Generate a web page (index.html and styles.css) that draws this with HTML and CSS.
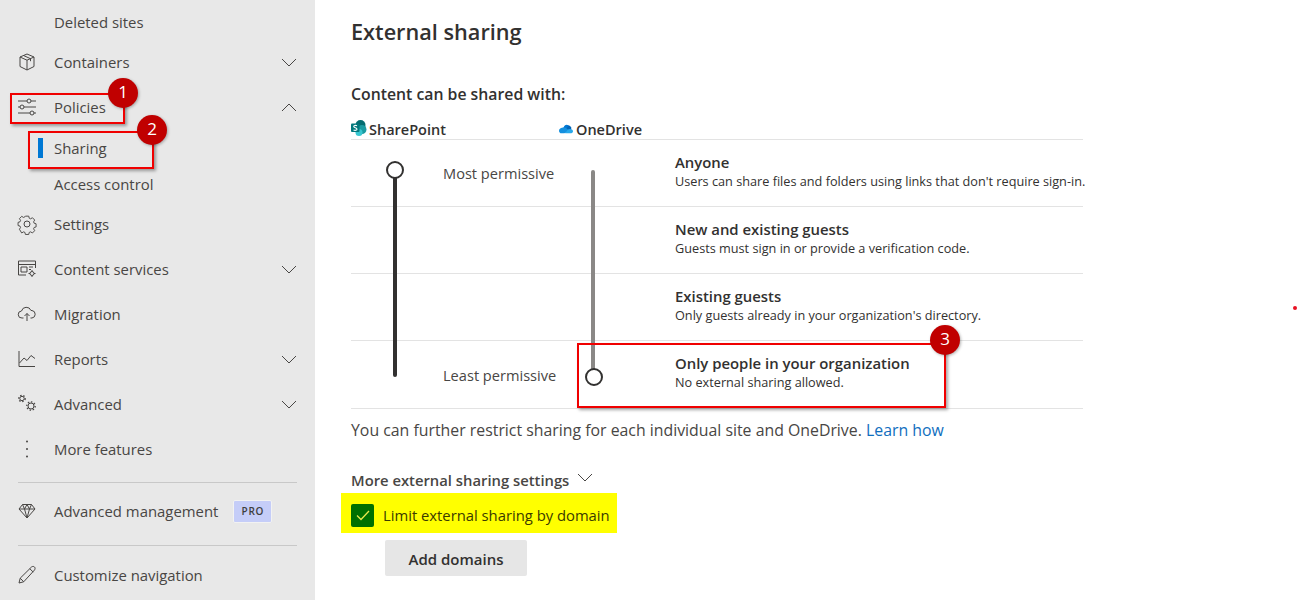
FILE: index.html
```html
<!DOCTYPE html>
<html lang="en">
<head>
<meta charset="utf-8">
<title>External sharing</title>
<link rel="stylesheet" href="styles.css">
</head>
<body>
<div class="page">
  <nav class="sidebar">
    <div class="row"><span class="icon"></span><span>Deleted sites</span></div>
    <div class="row gap-s">
      <svg class="icon" viewBox="0 0 18 18"><path d="M9 1l7 3v9.500L9 17l-7-3.500V4zM2 4l7 3.200L16 4M9 7.200V17M5.500 2.500l7 3.200v2.500"/></svg>
      <span>Containers</span>
      <svg class="chev" viewBox="0 0 16 9"><path d="M1 1l7 7 7-7"/></svg>
    </div>
    <div class="row gap-l">
      <svg class="icon" viewBox="0 0 18 18"><path d="M0 3h18M0 9h18M0 15h18"/><circle class="knock" cx="11" cy="3" r="2"/><circle class="knock" cx="4" cy="9" r="2"/><circle class="knock" cx="14" cy="15" r="2"/></svg>
      <span>Policies</span>
      <svg class="chev" viewBox="0 0 16 9"><path d="M1 8l7-7 7 7"/></svg>
    </div>
    <div class="row sub-first current"><span class="icon"><i class="marker"></i></span><span>Sharing</span></div>
    <div class="row"><span class="icon"></span><span>Access control</span></div>
    <div class="row gap-s">
      <svg class="icon" viewBox="0 0 18 18"><path d="M7.200 .8h3.600l.5 2.200 1.500.7 2-1.200 2.400 2.500-1.200 1.900.6 1.500 2.100.6v3.400l-2.100.6-.6 1.400 1.200 2-2.400 2.500-2-1.200-1.500.6-.5 2.200H7.200l-.5-2.200-1.500-.6-2 1.200L.8 14.900l1.200-2-.6-1.400L-.7 10.900V7.500l2.100-.6.6-1.500L.8 3.500 3.200 1l2 1.200 1.500-.7z" transform="translate(.7 .4) scale(.93)"/><circle cx="9" cy="9" r="3"/></svg>
      <span>Settings</span>
    </div>
    <div class="row gap-l">
      <svg class="icon" viewBox="0 0 18 18"><path d="M8 15H.5V1h17v7M.5 4.500h17M3 7h6v5H3zM11 7h4M11 9.500h2"/><circle cx="14" cy="13.500" r="2"/><path d="M14 10v1.500M14 15.500V17M10.500 13.500H12M16 13.500h1.500"/></svg>
      <span>Content services</span>
      <svg class="chev" viewBox="0 0 16 9"><path d="M1 1l7 7 7-7"/></svg>
    </div>
    <div class="row gap-l">
      <svg class="icon" viewBox="0 0 18 18"><path d="M5.500 13H4a3.500 3.500 0 0 1-.5-7A5 5 0 0 1 13 5.500h1a3.800 3.800 0 0 1 0 7.500h-1.500M9 16V8.500M6.500 11L9 8.500l2.500 2.500"/></svg>
      <span>Migration</span>
    </div>
    <div class="row gap-l">
      <svg class="icon" viewBox="0 0 18 18"><path d="M1 1v15.500h16M1.500 13l4.500-5 3 2.500L13 5.500l4 3"/></svg>
      <span>Reports</span>
      <svg class="chev" viewBox="0 0 16 9"><path d="M1 1l7 7 7-7"/></svg>
    </div>
    <div class="row gap-l">
      <svg class="icon" viewBox="0 0 18 18"><circle cx="4" cy="3.500" r="2.200"/><circle class="teeth" cx="4" cy="3.500" r="3.200"/><circle cx="13" cy="11" r="3"/><circle class="teeth" cx="13" cy="11" r="4.200"/></svg>
      <span>Advanced</span>
      <svg class="chev" viewBox="0 0 16 9"><path d="M1 1l7 7 7-7"/></svg>
    </div>
    <div class="row gap-l">
      <svg class="icon" viewBox="0 0 18 18"><circle class="dot" cx="9" cy="1.500" r="1"/><circle class="dot" cx="9" cy="9" r="1"/><circle class="dot" cx="9" cy="16.500" r="1"/></svg>
      <span>More features</span>
    </div>
    <hr class="rule rule-a">
    <div class="row">
      <svg class="icon" viewBox="0 0 18 18"><path d="M4.500 2.500h9L17 7l-8 9-8-9zM1 7h16M6.500 7L9 16l2.500-9M4.500 2.500L6.500 7 9 2.500 11.500 7l2-4.500"/></svg>
      <span>Advanced management</span>
      <span class="pro">PRO</span>
    </div>
    <hr class="rule rule-b">
    <div class="row">
      <svg class="icon" viewBox="0 0 18 18"><path d="M1 17l1.200-4.800L13.500 1c1-.8 2.300-.7 3 0s.8 2 0 3L5.700 15.800zM2.200 12.200l3.500 3.600M11.800 2.700l3.500 3.500"/></svg>
      <span>Customize navigation</span>
    </div>
  </nav>

  <main class="content">
    <h1 class="title">External sharing</h1>
    <h2 class="lead">Content can be shared with:</h2>
    <div class="apps">
      <div class="app app-sp">
        <svg class="app-icon" viewBox="0 0 16 16"><circle cx="9.500" cy="5" r="5" fill="#036c70"/><circle cx="11" cy="9.500" r="4.500" fill="#1a9ba1"/><circle cx="8" cy="12.500" r="3.500" fill="#37c6d0"/><rect x="0" y="3.500" width="8.500" height="8.500" rx="1" fill="#03787c"/><path class="sp-s" d="M6 5.800C4.500 5 2.700 5.400 2.700 6.600c0 1.400 3.300 1 3.300 2.600 0 1.200-2 1.500-3.500.8"/></svg>
        <span>SharePoint</span>
      </div>
      <div class="app">
        <svg class="app-icon od" viewBox="0 0 16 11"><path d="M5 8a5 5 0 0 1 9-4v3z" fill="#0364b8"/><path d="M5.500 3.500A4 4 0 0 1 11 2l-3 4z" fill="#0078d4"/><path d="M3.500 4.500c1-.5 3-1 4.500.5l5 4-7 2H3C1 11 0 9.500 0 8c0-2 1.800-3.500 3.500-3.500z" fill="#1490df"/><path d="M7 10.800L10 7c1.500-1.500 6-1 6 2 0 1-.8 1.800-2 1.800z" fill="#28a8ea"/></svg>
        <span>OneDrive</span>
      </div>
    </div>
    <div class="levels">
      <div class="level">
        <div class="perm">Most permissive</div>
        <div class="level-text"><strong>Anyone</strong><small>Users can share files and folders using links that don't require sign-in.</small></div>
      </div>
      <div class="level">
        <div class="perm"></div>
        <div class="level-text"><strong>New and existing guests</strong><small>Guests must sign in or provide a verification code.</small></div>
      </div>
      <div class="level">
        <div class="perm"></div>
        <div class="level-text"><strong>Existing guests</strong><small>Only guests already in your organization's directory.</small></div>
      </div>
      <div class="level level-last">
        <div class="perm perm-low">Least permissive</div>
        <div class="level-text"><strong>Only people in your organization</strong><small>No external sharing allowed.</small></div>
      </div>
      <div class="slider slider-sp"><i class="thumb thumb-top"></i></div>
      <div class="slider slider-od"><i class="thumb thumb-bottom"></i></div>
    </div>
    <p class="note">You can further restrict sharing for each individual site and OneDrive. <a href="#">Learn how</a></p>
    <div class="more">
      <span>More external sharing settings</span>
      <svg class="chev" viewBox="0 0 16 9"><path d="M1 1l7 7 7-7"/></svg>
    </div>
    <div class="limit">
      <span class="check"><svg viewBox="0 0 16 16"><path d="M2 8.500L6 12.500 14 4"/></svg></span>
      <span>Limit external sharing by domain</span>
    </div>
    <button class="add" type="button">Add domains</button>
  </main>

  <div class="callout c1"></div>
  <div class="callout c2"></div>
  <div class="callout c3"></div>
  <div class="num n1">1</div>
  <div class="num n2">2</div>
  <div class="num n3">3</div>
  <div class="speck"></div>
</div>
</body>
</html>
```
FILE: styles.css
```css
* { box-sizing: border-box; }
html, body { margin: 0; height: 100%; overflow: hidden; background: #fff; }
body { font-family: "Open Sans", "Noto Sans", "Liberation Sans", sans-serif; color: #323130; }
.page { position: relative; display: flex; width: 1299px; height: 600px; overflow: hidden; }

.sidebar { flex: 0 0 315px; background: #e8e8e8; padding: 4px 18px 0; font-size: 14.900px; color: #484644; }
.row { display: flex; align-items: center; height: 36px; }
.gap-s { margin-top: 4px; }
.gap-l { margin-top: 9px; }
.sub-first { margin-top: 5px; }
.icon { flex: 0 0 18px; width: 18px; height: 18px; margin-right: 18px; display: block; position: relative; overflow: visible; }
.icon path, .icon circle { fill: none; stroke: #484644; stroke-width: 1; }
.icon .knock { fill: #e8e8e8; }
.icon .dot { fill: #484644; stroke: none; }
.icon .teeth { stroke-width: 1.300; stroke-dasharray: 1.500 1.700; }
.chev { width: 16px; height: 9px; fill: none; overflow: visible; }
.chev path { fill: none; stroke: #484644; stroke-width: 1; }
.row .chev { margin-left: auto; margin-right: 0; }
.marker { position: absolute; left: 20px; top: -1px; width: 5px; height: 20px; background: #0078d4; }
.rule { border: 0; height: 1px; background: #c8c8c8; margin: 0; }
.rule-a { margin-top: 15px; margin-bottom: 10px; }
.rule-b { margin-top: 16px; margin-bottom: 11px; }
.pro { margin-left: 15px; width: 39px; height: 23px; display: flex; align-items: center; justify-content: center; background: #c5cdf8; border: 1px solid #f2f2f2; border-radius: 2px; font-size: 10px; font-weight: 600; letter-spacing: .8px; color: #3f3e3d; }

.content { flex: 1; padding: 15px 0 0 36px; min-width: 0; }
.title { margin: 0; font-size: 21.700px; line-height: 34px; font-weight: 600; color: #323130; }
.lead { margin: 34px 0 0; font-size: 15.800px; line-height: 22px; font-weight: 600; color: #323130; }
.apps { display: flex; margin-top: 15px; height: 19px; font-size: 14.500px; font-weight: 600; color: #323130; }
.app { display: flex; align-items: center; }
.app-sp { width: 208px; }
.app-icon { width: 16px; height: 16px; margin-right: 2px; margin-top: -4px; }
.app-icon.od { height: 11px; width: 14px; margin-top: -3px; margin-right: 3px; }
.sp-s { fill: none; stroke: #fff; stroke-width: 1.100; }

.levels { position: relative; width: 732px; border-top: 1px solid #e3e3e3; }
.level { display: flex; height: 67px; border-bottom: 1px solid #e3e3e3; }
.level-last { height: 68px; }
.perm { flex: 0 0 324px; padding: 23px 0 0 92px; font-size: 14.600px; line-height: 20px; color: #484644; }
.perm-low { padding-top: 24px; }
.level-text { padding-top: 12px; white-space: nowrap; }
.level-text strong { display: block; font-size: 14.900px; line-height: 20px; font-weight: 600; color: #323130; }
.level-text small { display: block; font-size: 12.700px; line-height: 18px; color: #323130; }
.slider { position: absolute; width: 4px; border-radius: 2px; }
.slider-sp { left: 42px; top: 30px; height: 207px; background: #323130; }
.slider-od { left: 240px; top: 30px; height: 207px; background: #8a8886; }
.thumb { position: absolute; left: -7px; width: 18px; height: 18px; border-radius: 50%; border: 2px solid #323130; background: #fff; }
.thumb-top { top: -9px; }
.thumb-bottom { bottom: -9px; left: -6px; }

.note { margin: 10px 0 0; font-size: 15.850px; line-height: 22px; color: #484644; white-space: nowrap; }
.note a { color: #106ebe; text-decoration: none; }
.more { display: flex; align-items: center; margin-top: 28px; height: 22px; font-size: 14.800px; font-weight: 600; color: #484644; }
.more .chev { margin-left: 8px; margin-top: -6px; }
.limit { display: flex; align-items: center; width: 276px; height: 40px; margin: 2px 0 0 -10px; padding: 4px 0 0 10px; background: #ffff00; font-size: 14.800px; color: #3b3a00; }
.check { width: 23px; height: 23px; margin-right: 9px; display: flex; align-items: center; justify-content: center; background: #007000; border-radius: 2px; }
.check svg { width: 16px; height: 16px; fill: none; }
.check path { fill: none; stroke: #e8e84a; stroke-width: 1.300; }
.add { display: block; width: 142px; height: 36px; margin: 7px 0 0 34px; padding: 2px 0 0; border: 0; border-radius: 2px; background: #e6e6e6; font: 600 15px "Open Sans", "Noto Sans", sans-serif; color: #323130; }

.callout { position: absolute; border: 2px solid #f00000; box-shadow: 2px 2px 3px rgba(0,0,0,.35); }
.c1 { left: 10px; top: 93px; width: 115px; height: 31px; }
.c2 { left: 28px; top: 131px; width: 126px; height: 38px; }
.c3 { left: 577px; top: 343px; width: 369px; height: 65px; }
.num { position: absolute; width: 30px; height: 30px; border-radius: 50%; background: #c00000; color: #fff; font-size: 17px; line-height: 28px; text-align: center; box-shadow: 1px 1px 3px rgba(0,0,0,.3); }
.n1 { left: 108px; top: 78px; }
.n2 { left: 137px; top: 115px; }
.n3 { left: 930px; top: 325px; }
.speck { position: absolute; left: 1293px; top: 306px; width: 4px; height: 4px; border-radius: 50%; background: #e81123; }
```
